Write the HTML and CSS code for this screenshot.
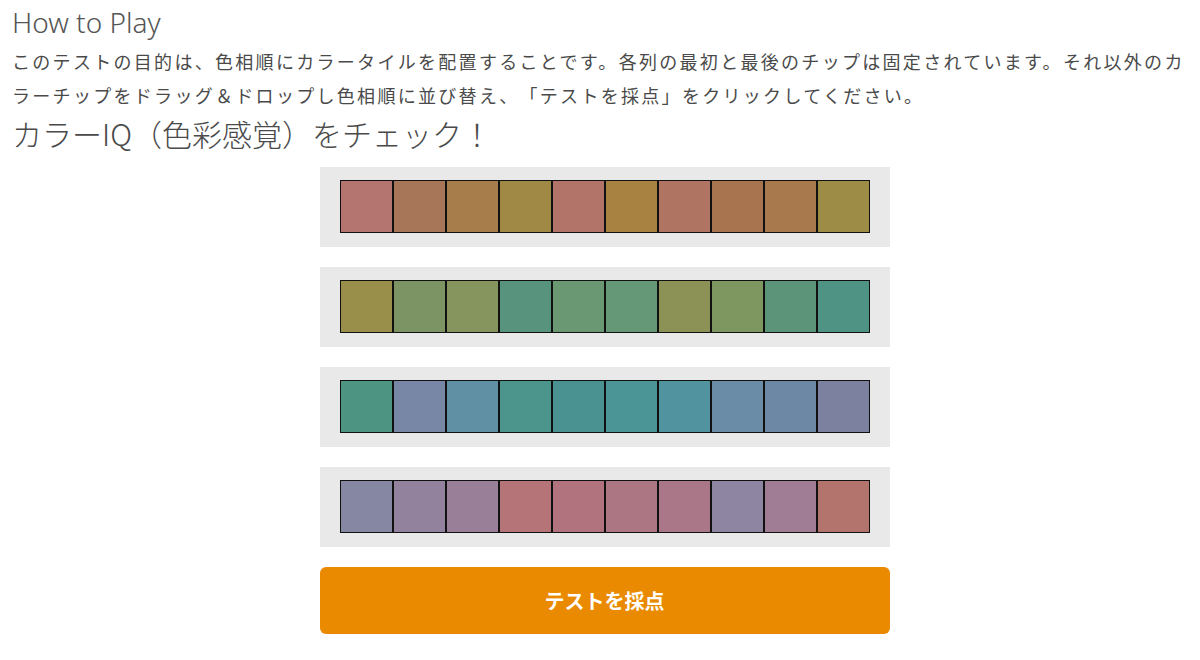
FILE: index.html
```html
<!DOCTYPE html>
<html lang="ja">
<head>
    <meta charset="UTF-8">
    <meta name="viewport" content="width=device-width, initial-scale=1.0">
    <title>カラーIQ（色彩感覚）をチェック！</title>
    <link rel="stylesheet" href="styles.css">
</head>
<body>
    <div class="page">
        <h2 class="howto">How to Play</h2>
        <p class="desc">このテストの目的は、色相順にカラータイルを配置することです。各列の最初と最後のチップは固定されています。それ以外のカラーチップをドラッグ＆ドロップし色相順に並び替え、「テストを採点」をクリックしてください。</p>
        <h1 class="title">カラーIQ（色彩感覚）をチェック！</h1>

        <div class="game">
            <div class="row" id="row1"></div>
            <div class="row" id="row2"></div>
            <div class="row" id="row3"></div>
            <div class="row" id="row4"></div>
            <button class="btn" id="scoreBtn">テストを採点</button>
        </div>
    </div>

    <script>
        // Tile colours per row (first and last are fixed)
        const rows = [
            ['#b47570', '#a77558', '#a87d4c', '#a08944', '#b27468', '#a78241', '#b07462', '#a8744f', '#a9794e', '#9c8c45'],
            ['#9a8f4a', '#7c9364', '#86955d', '#58937e', '#6a9872', '#649876', '#8c9255', '#7e9660', '#5c947a', '#4f9384'],
            ['#4e9483', '#7787a5', '#6090a4', '#4b958d', '#4a9292', '#4b9596', '#5293a0', '#6a8ca7', '#6c88a5', '#7d81a0'],
            ['#8587a3', '#93829e', '#9a7f99', '#b47478', '#b1747e', '#ad7683', '#aa7788', '#8e85a2', '#a07d94', '#b4746e']
        ];

        rows.forEach((colors, i) => {
            const row = document.getElementById('row' + (i + 1));
            colors.forEach(c => {
                const tile = document.createElement('div');
                tile.className = 'tile';
                tile.style.background = c;
                row.appendChild(tile);
            });
        });
    </script>
</body>
</html>
```

FILE: styles.css
```css
* { box-sizing: border-box; margin: 0; padding: 0; }
body { background: #fff; color: #4a4a4a; font-family: "Noto Sans", "Noto Sans CJK JP", sans-serif; text-spacing-trim: space-all; }
.page { padding: 4px 3px 0 12px; }
.howto { font-size: 28px; font-weight: 300; line-height: 36px; color: #555; }
.desc { font-size: 18px; line-height: 34px; letter-spacing: 2.3px; margin-top: 5px; color: #4a4a4a; }
.title { font-family: "Noto Sans CJK JP", sans-serif; font-size: 30px; font-weight: 300; line-height: 40px; color: #4a4a4a; margin-bottom: 14px; }
.game { width: 570px; margin: 0 auto; display: flex; flex-direction: column; gap: 20px; }
.row { background: #e9e9e9; height: 80px; padding: 13px 20px 14px; display: flex; }
.tile { width: 53px; height: 53px; border: 1px solid #111; }
.btn { height: 67px; background: #e98a00; color: #fff; border: none; border-radius: 6px; font-family: inherit; font-size: 20px; font-weight: 700; cursor: pointer; }
```
